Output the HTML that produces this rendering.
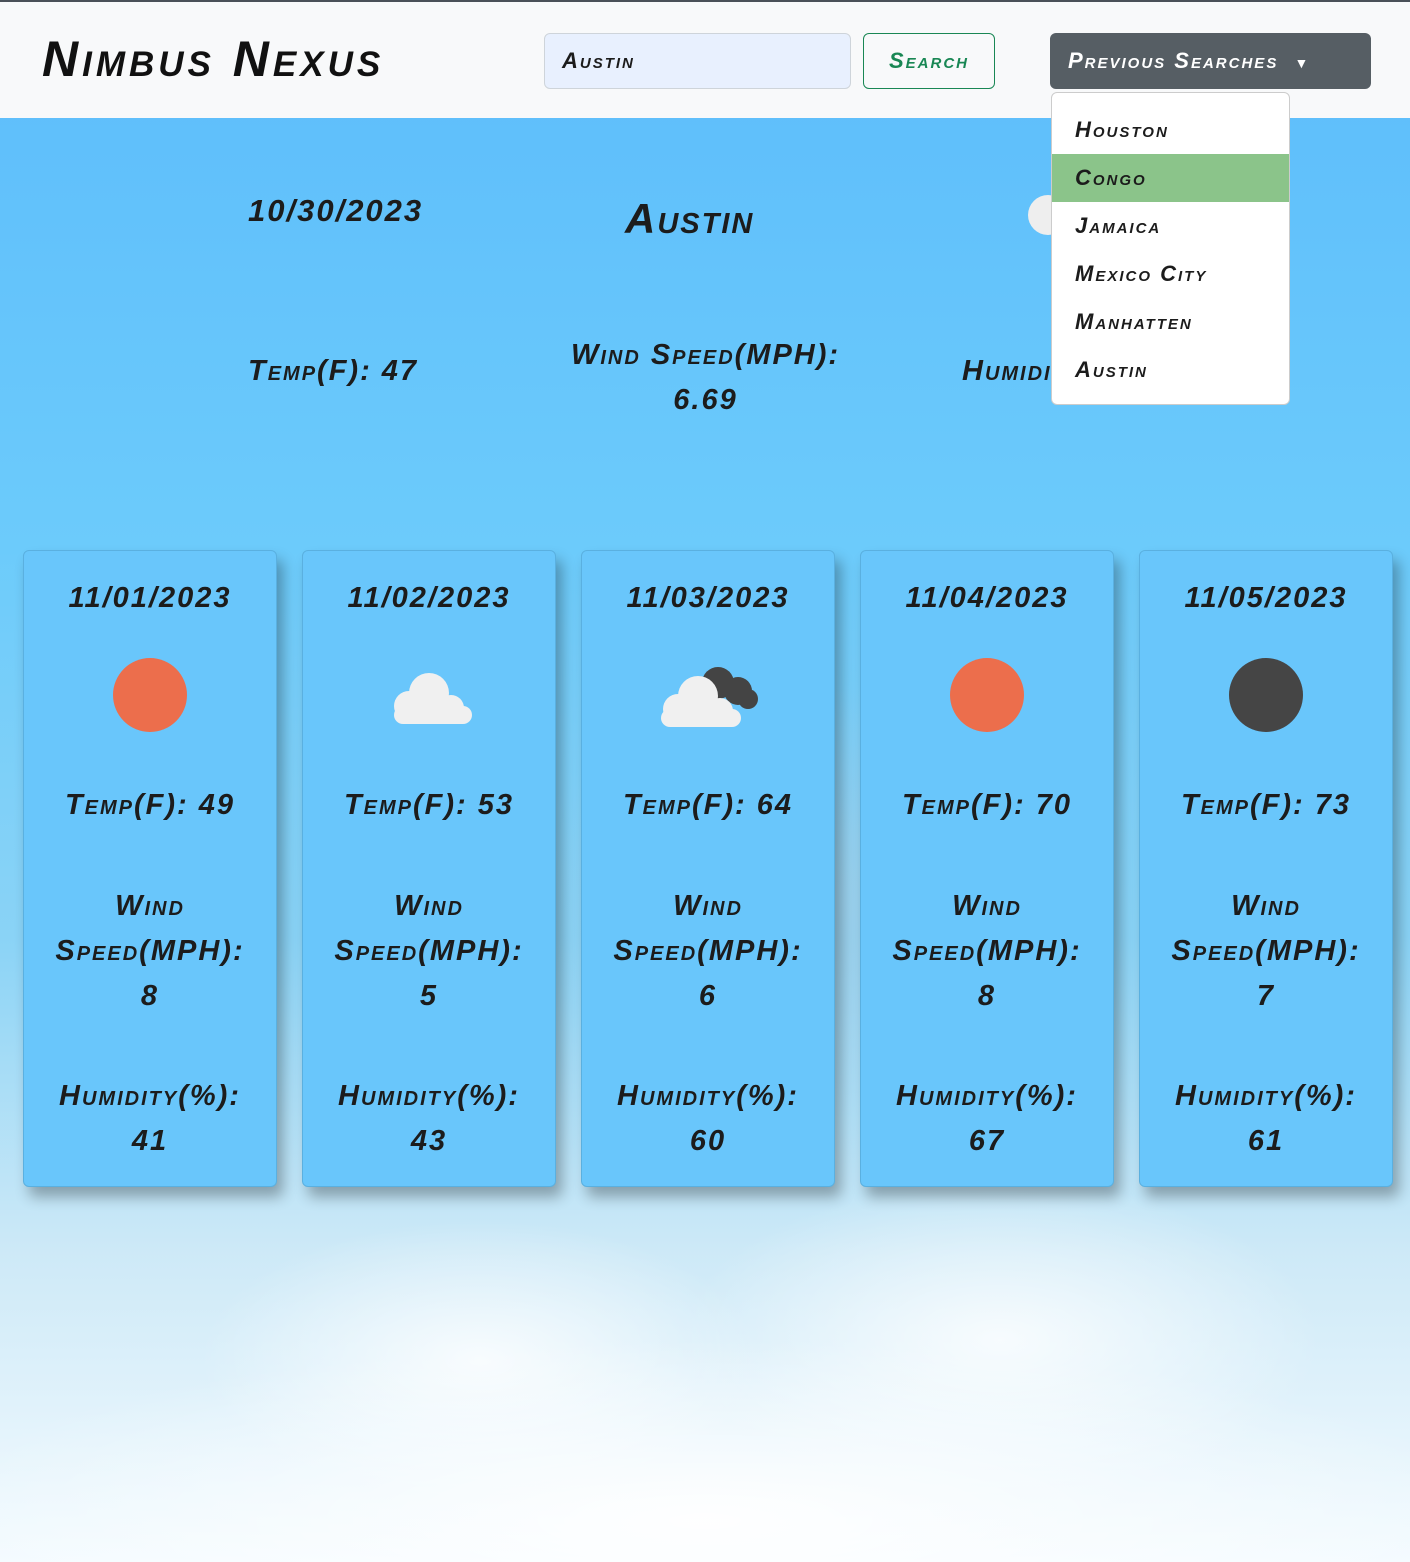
<!DOCTYPE html>
<html><head><meta charset="utf-8"><style>
*{box-sizing:border-box;margin:0;padding:0}
html,body{width:1410px;height:1562px;overflow:hidden}
body{font-family:"Liberation Sans",sans-serif;font-weight:bold;font-style:italic;font-variant:small-caps;color:#1c1c1c;position:relative;
background:
radial-gradient(ellipse 800px 180px at 705px 1520px,rgba(255,255,255,.95),rgba(255,255,255,0)),
radial-gradient(ellipse 280px 140px at 480px 1360px,rgba(255,255,255,.8),rgba(255,255,255,0)),
radial-gradient(ellipse 320px 160px at 1000px 1340px,rgba(255,255,255,.8),rgba(255,255,255,0)),
radial-gradient(ellipse 260px 220px at 800px 900px,rgba(200,205,215,.35),rgba(200,205,215,0)),
linear-gradient(180deg,#5cbcfb 0%,#6ccbfb 35%,#8ad3f6 60%,#cde9f7 80%,#f4fbff 100%);}
.t{position:absolute;white-space:nowrap;letter-spacing:2px}
.nav{position:absolute;top:0;left:0;width:1410px;height:118px;background:#f8f9fa;border-top:2px solid #4a5058}
.card{position:absolute;top:550px;width:254px;height:637px;background:#69c6fb;border:1px solid #5ab0e0;border-radius:6px;box-shadow:6px 10px 14px rgba(0,0,0,.3);text-align:center;font-size:29px;line-height:45px;letter-spacing:2px}
.card .d{position:absolute;top:25px;left:0;right:0}
.card .ic{position:absolute;top:105px;left:0;right:0;height:80px}
.card .tp{position:absolute;top:232px;left:0;right:0}
.card .w{position:absolute;top:333px;left:0;right:0}
.card .h{position:absolute;top:523px;left:0;right:0}
.dd{position:absolute;left:1051px;top:92px;width:239px;height:313px;background:#fff;border:1px solid #ccc;border-radius:6px}
.dd div{height:48px;line-height:48px;padding-left:23px;font-size:22px;letter-spacing:2px}
</style></head><body>
<div class="nav">
<div class="t" style="left:42px;top:28px;font-size:50px;letter-spacing:4px;color:#111">Nimbus Nexus</div>
<div style="position:absolute;left:544px;top:31px;width:307px;height:56px;background:#e8f0fe;border:1px solid #ced4da;border-radius:6px"></div>
<div class="t" style="left:562px;top:46px;font-size:22px">Austin</div>
<div style="position:absolute;left:863px;top:31px;width:132px;height:56px;border:1px solid #198754;border-radius:6px;color:#198754;font-size:22px;text-align:center;line-height:54px;letter-spacing:2px">Search</div>
<div style="position:absolute;left:1050px;top:31px;width:321px;height:56px;background:#565e64;border-radius:6px;color:#fff;font-size:22px;line-height:56px;padding-left:18px;letter-spacing:2px">Previous Searches <span style="font-size:14px;margin-left:8px">▼</span></div>
</div>
<div class="t" style="left:248px;top:193px;font-size:31px">10/30/2023</div>
<div class="t" style="left:625px;top:195px;font-size:42px">Austin</div>
<div style="position:absolute;left:1028px;top:195px;width:40px;height:40px;background:#eee;border-radius:50%"></div>
<div class="t" style="left:248px;top:355px;font-size:29px">Temp(F): 47</div>
<div class="t" style="left:553px;top:333px;font-size:29px;width:305px;text-align:center;line-height:45px">Wind Speed(MPH):<br>6.69</div>
<div class="t" style="left:962px;top:355px;font-size:29px">Humidity</div>
<div class="dd">
<div style="margin-top:13px">Houston</div>
<div style="background:#8bc48a">Congo</div>
<div>Jamaica</div><div>Mexico City</div><div>Manhatten</div><div>Austin</div>
</div>

<div class="card" style="left:23px"><div class="d">11/01/2023</div><div class="ic"><div style="width:74px;height:74px;border-radius:50%;background:#ec6e4c;margin:2px auto"></div></div><div class="tp">Temp(F): 49</div><div class="w">Wind<br>Speed(MPH):<br>8</div><div class="h">Humidity(%):<br>41</div></div>
<div class="card" style="left:302px"><div class="d">11/02/2023</div><div class="ic"><svg width="90" height="60" viewBox="0 0 90 60" style="margin-top:12px"><g fill="#f0f0f0"><circle cx="45" cy="25" r="20"/><circle cx="25" cy="38" r="15"/><circle cx="67" cy="40" r="13"/><rect x="10" y="38" width="78" height="18" rx="9"/></g></svg></div><div class="tp">Temp(F): 53</div><div class="w">Wind<br>Speed(MPH):<br>5</div><div class="h">Humidity(%):<br>43</div></div>
<div class="card" style="left:581px"><div class="d">11/03/2023</div><div class="ic"><svg width="110" height="70" viewBox="0 0 110 70" style="margin-top:5px"><g fill="#444"><circle cx="65" cy="22" r="16"/><circle cx="85" cy="30" r="14"/><circle cx="95" cy="38" r="10"/></g><g fill="#f0f0f0"><circle cx="45" cy="35" r="20"/><circle cx="25" cy="48" r="15"/><circle cx="67" cy="50" r="13"/><rect x="8" y="48" width="80" height="18" rx="9"/></g></svg></div><div class="tp">Temp(F): 64</div><div class="w">Wind<br>Speed(MPH):<br>6</div><div class="h">Humidity(%):<br>60</div></div>
<div class="card" style="left:860px"><div class="d">11/04/2023</div><div class="ic"><div style="width:74px;height:74px;border-radius:50%;background:#ec6e4c;margin:2px auto"></div></div><div class="tp">Temp(F): 70</div><div class="w">Wind<br>Speed(MPH):<br>8</div><div class="h">Humidity(%):<br>67</div></div>
<div class="card" style="left:1139px"><div class="d">11/05/2023</div><div class="ic"><div style="width:74px;height:74px;border-radius:50%;background:#454545;margin:2px auto"></div></div><div class="tp">Temp(F): 73</div><div class="w">Wind<br>Speed(MPH):<br>7</div><div class="h">Humidity(%):<br>61</div></div>
</body></html>
